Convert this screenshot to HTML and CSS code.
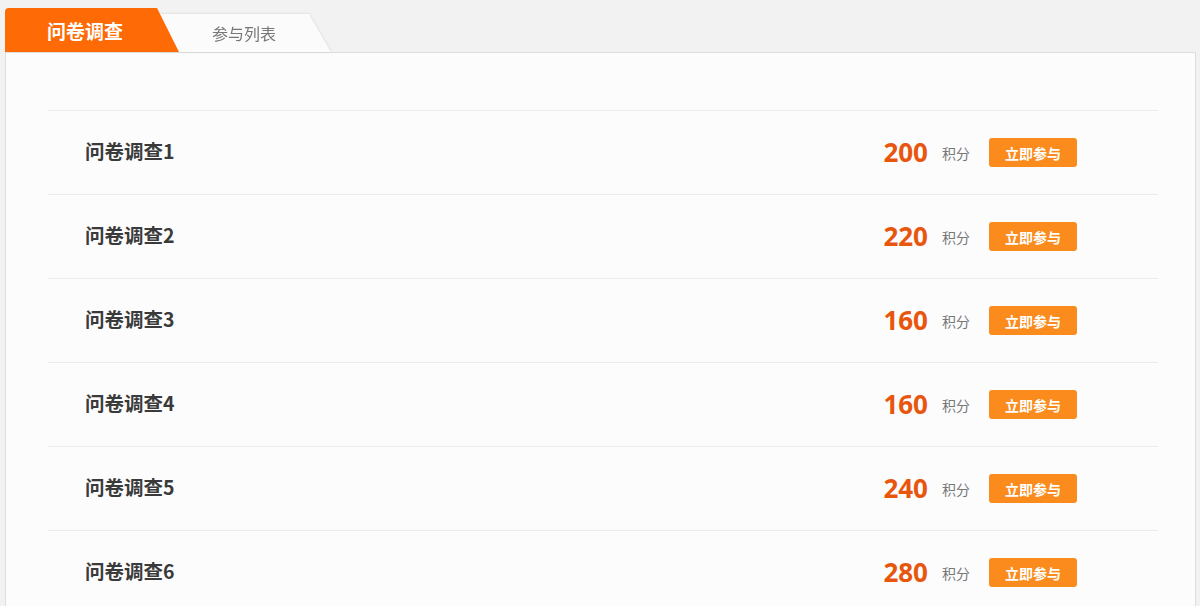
FILE: index.html
```html
<!DOCTYPE html>
<html lang="zh-CN">
<head>
    <meta charset="UTF-8">
    <meta name="viewport" content="width=device-width, initial-scale=1.0">
    <title>问卷调查</title>
    <link rel="stylesheet" href="styles.css">
</head>
<body>
    <div class="page">
        <div class="tabs">
            <div class="tab tab-active">问卷调查</div>
            <div class="tab-wrap">
                <div class="tab tab-normal">参与列表</div>
            </div>
        </div>

        <section class="panel">
            <ul class="survey-list">
                <li class="survey-row">
                    <span class="survey-title">问卷调查1</span>
                    <span class="points">200</span>
                    <span class="unit">积分</span>
                    <button class="join-btn" type="button">立即参与</button>
                </li>
                <li class="survey-row">
                    <span class="survey-title">问卷调查2</span>
                    <span class="points">220</span>
                    <span class="unit">积分</span>
                    <button class="join-btn" type="button">立即参与</button>
                </li>
                <li class="survey-row">
                    <span class="survey-title">问卷调查3</span>
                    <span class="points">160</span>
                    <span class="unit">积分</span>
                    <button class="join-btn" type="button">立即参与</button>
                </li>
                <li class="survey-row">
                    <span class="survey-title">问卷调查4</span>
                    <span class="points">160</span>
                    <span class="unit">积分</span>
                    <button class="join-btn" type="button">立即参与</button>
                </li>
                <li class="survey-row">
                    <span class="survey-title">问卷调查5</span>
                    <span class="points">240</span>
                    <span class="unit">积分</span>
                    <button class="join-btn" type="button">立即参与</button>
                </li>
                <li class="survey-row">
                    <span class="survey-title">问卷调查6</span>
                    <span class="points">280</span>
                    <span class="unit">积分</span>
                    <button class="join-btn" type="button">立即参与</button>
                </li>
            </ul>
        </section>
    </div>
</body>
</html>
```

FILE: styles.css
```css
html,
body {
  margin: 0;
  padding: 0;
  background-color: #f2f2f3;
  font-family: "Noto Sans CJK SC", "Noto Sans", sans-serif;
  height: 606px;
  overflow: hidden;
}

.page {
  padding: 8px 4px 0 5px;
}

.tabs {
  display: flex;
  align-items: flex-end;
  height: 44px;
}

.tab {
  display: flex;
  align-items: center;
  box-sizing: border-box;
}

.tab-active {
  position: relative;
  z-index: 2;
  width: 174px;
  height: 44px;
  padding-left: 42px;
  background-color: #fe6a05;
  color: #fff;
  font-size: 19px;
  font-weight: bold;
  border-radius: 4px 0 0 0;
  clip-path: polygon(0 0, 152px 0, 174px 100%, 0 100%);
}

.tab-wrap {
  margin-left: -20px;
  filter: drop-shadow(0 0 1px #cfcfcf);
}

.tab-normal {
  width: 172px;
  height: 38px;
  padding-left: 53px;
  background-color: #fbfbfc;
  color: #777;
  font-size: 16px;
  clip-path: polygon(0 0, 150px 0, 172px 100%, 0 100%);
}

.panel {
  background-color: #fcfcfd;
  border: 1px solid #dedede;
  border-bottom: none;
  height: 560px;
  padding: 57px 37px 0 42px;
  box-sizing: border-box;
}

.survey-list {
  list-style: none;
  margin: 0;
  padding: 0;
}

.survey-row {
  display: flex;
  align-items: center;
  height: 84px;
  box-sizing: border-box;
  border-top: 1px solid #ececee;
  padding: 0 81px 0 37px;
}

.survey-title {
  flex: 1;
  margin-top: -4px;
  font-size: 19.5px;
  font-weight: bold;
  color: #3a3a3a;
}

.points {
  margin-top: -2px;
  font-family: "Open Sans", "Noto Sans", sans-serif;
  font-size: 26px;
  font-weight: bold;
  color: #e8560e;
}

.unit {
  margin-left: 14px;
  font-size: 14px;
  color: #777;
}

.join-btn {
  margin-left: 19px;
  width: 88px;
  height: 29px;
  border: none;
  border-radius: 3px;
  background-color: #fb8b1c;
  color: #fff;
  font-family: "Noto Sans CJK SC", sans-serif;
  font-size: 14px;
  font-weight: bold;
  cursor: pointer;
}
```
